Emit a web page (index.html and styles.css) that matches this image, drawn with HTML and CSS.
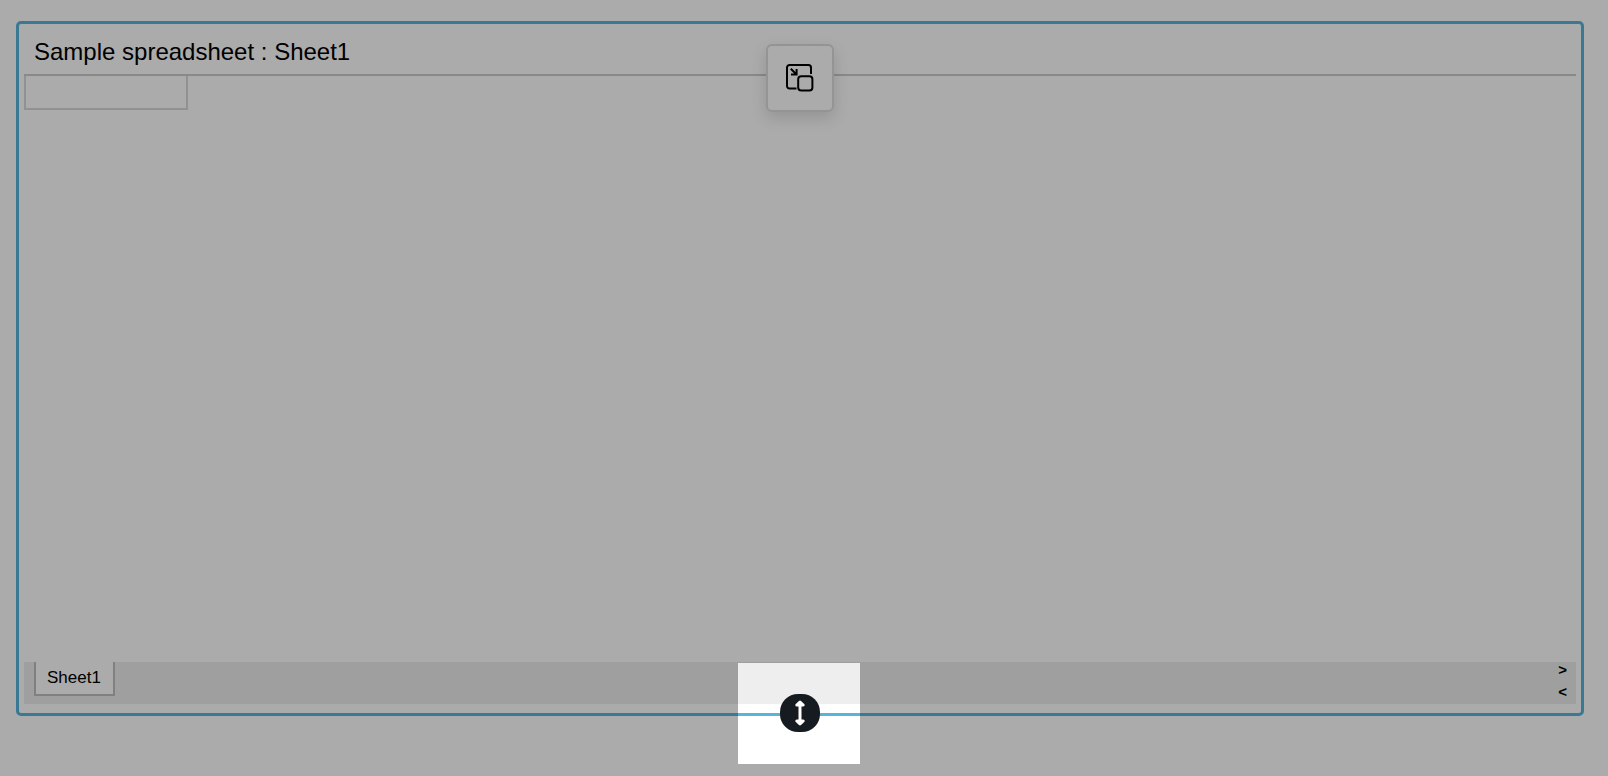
FILE: index.html
```html
<!DOCTYPE html>
<html lang="en">

<head>
    <meta charset="UTF-8">
    <title>Sample spreadsheet : Sheet1</title>
    <meta name="viewport" content="width=device-width, initial-scale=1.0" />
    <link rel="stylesheet" href="styles.css">
</head>

<body>
    <main class="frame">
        <header class="sheet-header">
            <h1 class="sheet-title">Sample spreadsheet : Sheet1</h1>
        </header>
        <input class="cell-input" type="text" aria-label="Cell value">
        <div class="grid"></div>
        <footer class="tab-bar">
            <button class="tab" type="button">Sheet1</button>
            <div class="tab-nav">
                <button type="button" aria-label="Next sheet">&gt;</button>
                <button type="button" aria-label="Previous sheet">&lt;</button>
            </div>
        </footer>

        <button class="shrink-btn" type="button" aria-label="Shrink">
            <svg viewBox="0 0 28 28">
                <path d="M25 10V3.500A2.500 2.500 0 0 0 22.500 1h-19A2.500 2.500 0 0 0 1 3.500v18.500a2.500 2.500 0 0 0 2.500 2.500H10.500" />
                <rect x="12.200" y="12.200" width="14.200" height="14.200" rx="3" />
                <path d="M4.800 4.800l5.500 5.500M10.600 5v5.600H5" />
            </svg>
        </button>

        <div class="spotlight"></div>
        <button class="resize-handle" type="button" aria-label="Resize height">
            <svg viewBox="0 0 40 38">
                <path class="shaft" d="M20 10v18" />
                <path class="heads" d="M20 8l3.200 3h-6.400zM20 30l3.200-3h-6.400z" />
            </svg>
        </button>
    </main>
</body>

</html>
```
FILE: styles.css
```css
* {
    margin: 0;
    padding: 0;
    box-sizing: border-box;
}

body {
    font-family: "Liberation Sans", Arial, sans-serif;
    height: 100vh;
    display: flex;
    padding: 21px 24px 60px 16px;
    background: #fff;
    color: #000;
    overflow: hidden;
}

button {
    font-family: inherit;
    color: inherit;
    border: none;
    background: none;
    cursor: pointer;
}

.frame {
    position: relative;
    flex: 1;
    display: flex;
    flex-direction: column;
    padding: 5px 5px 9px;
    border: 3px solid #57b5dc;
    border-radius: 5px;
}

.sheet-header {
    height: 47px;
    padding: 9px 10px 0;
    border-bottom: 2px solid #ccc;
}

.sheet-title {
    font-size: 24px;
    line-height: 28px;
    font-weight: normal;
}

.cell-input {
    width: 164px;
    height: 34px;
    padding: 0 8px;
    font-size: 17px;
    border: 2px solid #d8d8d8;
    border-top: none;
    border-radius: 0;
    outline: none;
}

.grid {
    flex: 1;
}

.tab-bar {
    height: 42px;
    padding: 0 9px 0 10px;
    display: flex;
    justify-content: space-between;
    align-items: flex-start;
    background: #eee;
}

.tab {
    height: 34px;
    padding: 0 12px 0 11px;
    font-size: 17px;
    background: #fff;
    border: 2px solid #bfbfbf;
    border-top: none;
}

.tab-nav {
    display: flex;
    flex-direction: column;
    gap: 6px;
}

.tab-nav button {
    height: 16px;
    font-size: 15px;
    line-height: 16px;
    font-weight: bold;
}

.shrink-btn {
    position: absolute;
    top: 20px;
    left: 50%;
    width: 68px;
    height: 68px;
    transform: translateX(-50%);
    display: flex;
    justify-content: center;
    align-items: center;
    background: #fff;
    border: 2px solid #ddd;
    border-radius: 6px;
    box-shadow: 0 6px 16px rgba(0, 0, 0, 0.14);
}

.shrink-btn svg {
    width: 28px;
    height: 28px;
    fill: none;
    stroke: #000;
    stroke-width: 2;
}

/* everything outside the spotlight is dimmed by its shadow */
.spotlight {
    position: absolute;
    bottom: -51px;
    left: calc(50% - 1px);
    width: 122px;
    height: 101px;
    transform: translateX(-50%);
    box-shadow: 0 0 0 9999px rgba(0, 0, 0, 0.33);
    pointer-events: none;
}

.resize-handle {
    position: absolute;
    bottom: -19px;
    left: 50%;
    width: 40px;
    height: 38px;
    transform: translateX(-50%);
    background: #161b21;
    border-radius: 18px;
    cursor: ns-resize;
}

.resize-handle svg {
    display: block;
    fill: #fff;
    stroke: #fff;
    stroke-width: 3;
    stroke-linejoin: round;
}
```
